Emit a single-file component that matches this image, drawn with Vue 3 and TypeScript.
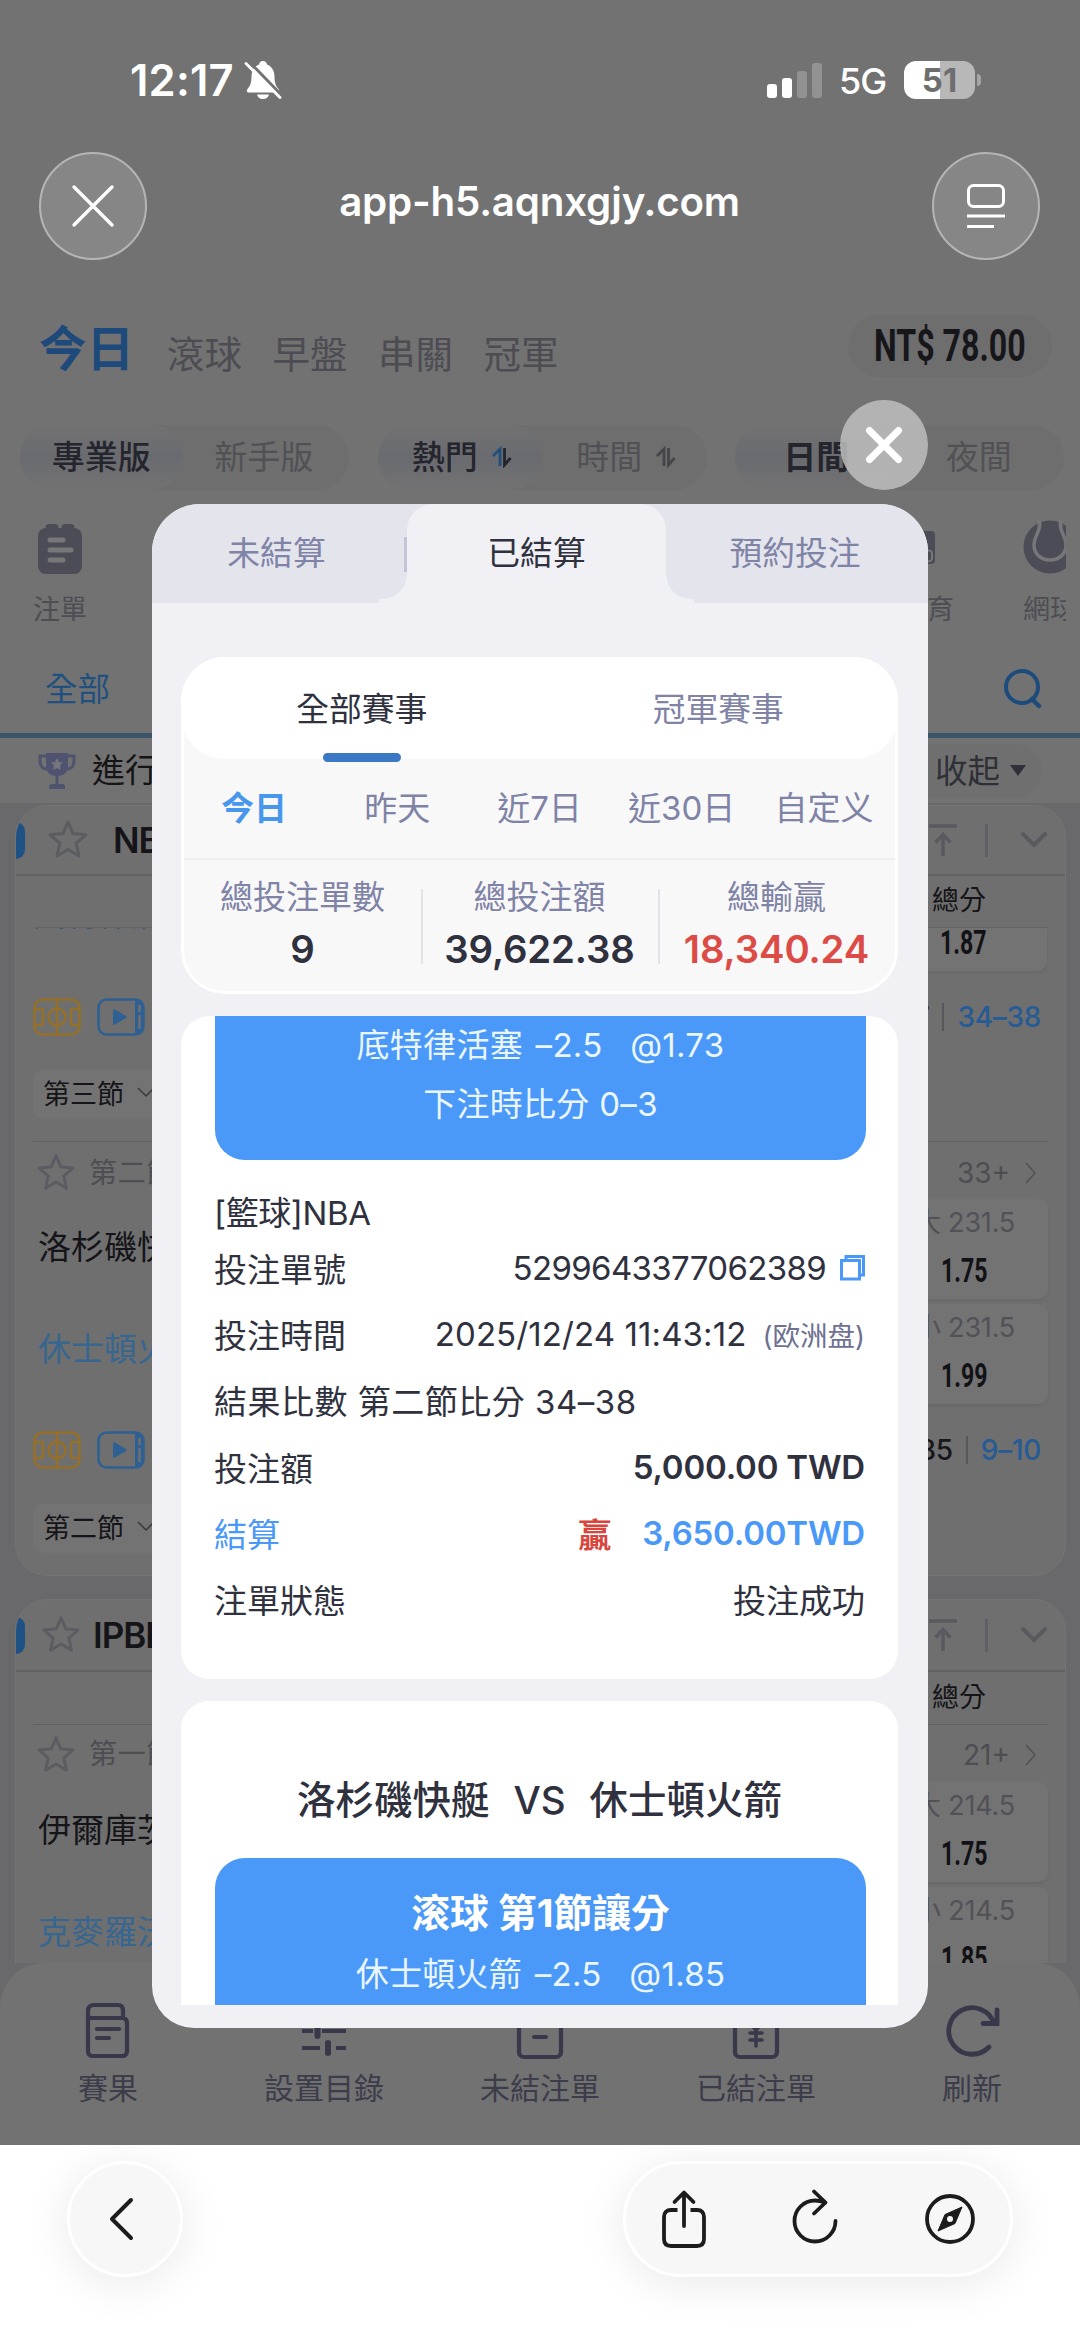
<script setup lang="ts">
interface Odd { line: string; value: string; side: string }
interface Match { period: string; more: string; home: string; away: string; odds: Odd[] }
interface DateTab { label: string; active?: boolean }
interface Stat { label: string; value: string; cls: string }

const sports = ['滾球', '早盤', '串關', '冠軍']
const dateTabs: DateTab[] = [
  { label: '今日', active: true },
  { label: '昨天' },
  { label: '近7日' },
  { label: '近30日' },
  { label: '自定义' },
]
const stats: Stat[] = [
  { label: '總投注單數', value: '9', cls: '' },
  { label: '總投注額', value: '39,622.38', cls: '' },
  { label: '總輸贏', value: '18,340.24', cls: 'win' },
]
const nba: Match = {
  period: '第二節',
  more: '33+',
  home: '洛杉磯快艇',
  away: '休士頓火箭',
  odds: [
    { side: '大', line: '231.5', value: '1.75' },
    { side: '小', line: '231.5', value: '1.99' },
  ],
}
const ipbl: Match = {
  period: '第一節',
  more: '21+',
  home: '伊爾庫茨克',
  away: '克麥羅沃',
  odds: [
    { side: '大', line: '214.5', value: '1.75' },
    { side: '小', line: '214.5', value: '1.85' },
  ],
}
</script>

<template>
  <div class="screen">
    <svg class="defs" width="0" height="0">
      <symbol id="star" viewBox="0 0 44 44">
        <path d="M22 4l5 11.6 12.800 1.200-9.600 8.400 2.800 12.800L22 31.500 11 38l2.800-12.800-9.600-8.400L17 15.600z" fill="none" stroke="currentColor" stroke-width="3" stroke-linejoin="round" />
      </symbol>
      <symbol id="court" viewBox="0 0 48 38">
        <g fill="none" stroke="currentColor" stroke-width="2.600">
          <rect x="1.500" y="1.500" width="45" height="35" rx="8" />
          <path d="M24 1.500v35M2 11h6q2 0 2 2v12q0 2-2 2H2M46 11h-6q-2 0-2 2v12q0 2 2 2h6" />
          <circle cx="24" cy="19" r="8.500" />
        </g>
      </symbol>
      <symbol id="play" viewBox="0 0 48 38">
        <rect x="1.500" y="1.500" width="45" height="35" rx="8" fill="none" stroke="currentColor" stroke-width="2.600" />
        <path d="M38 1h2q7 1 7 8v20q0 7-7 8h-2z" fill="currentColor" />
        <path d="M42.500 8v5M42.500 18v12" stroke="#707070" stroke-width="2.500" stroke-linecap="round" />
        <path d="M16 12.500v13q0 2 2 1l11-6.500q1.500-1 0-2l-11-6.500q-2-1-2 1z" fill="currentColor" />
      </symbol>
      <symbol id="pin" viewBox="0 0 32 36">
        <path d="M2 4h28M16 34V13M8.500 20.500L16 12.500l7.500 8" fill="none" stroke="currentColor" stroke-width="3.400" />
      </symbol>
      <symbol id="chev" viewBox="0 0 28 18">
        <path d="M3 3l11 11L25 3" fill="none" stroke="currentColor" stroke-width="4" stroke-linecap="round" />
      </symbol>
    </svg>

    <header class="status">
      <span class="clock">12:17</span>
      <svg class="bell" width="38" height="40" viewBox="0 0 38 40">
        <path d="M19 1c2.500 0 3.800 1.600 4 3.500 5 2 7.500 6.500 7.500 12 0 7 1.500 9.500 4 12.500 1.500 1.800.5 3.500-1.500 3.500H5c-2 0-3-1.700-1.500-3.500 2.500-3 4-5.500 4-12.500 0-5.500 2.500-10 7.500-12C15.200 2.600 16.500 1 19 1zM13 34.500h12c-.8 3-3 4.500-6 4.500s-5.200-1.500-6-4.500z" fill="#fff" />
        <path d="M5 1.500l32 33" stroke="#727272" stroke-width="3" />
        <path d="M2 3.500l34 34" stroke="#fff" stroke-width="2.800" stroke-linecap="round" />
      </svg>
      <div class="signal"><i class="on b1" /><i class="on b2" /><i class="b3" /><i class="b4" /></div>
      <span class="net">5G</span>
      <div class="battery">51</div>
      <i class="nub" />
    </header>

    <div class="browser">
      <div class="glass">
        <svg width="44" height="44" viewBox="0 0 44 44"><path d="M3 3l38 38M41 3L3 41" stroke="#fff" stroke-width="3.400" stroke-linecap="round" /></svg>
      </div>
      <span class="url">app-h5.aqnxgjy.com</span>
      <div class="glass">
        <svg width="40" height="46" viewBox="0 0 40 46"><g fill="none" stroke="#fff" stroke-width="3"><rect x="2.500" y="2.500" width="35" height="21" rx="5" /><path d="M1 33h38M1 43.500h27" /></g></svg>
      </div>
    </div>

    <nav class="topnav">
      <b class="today">今日</b>
      <span v-for="s in sports" :key="s" class="sport">{{ s }}</span>
      <div class="balance"><span>NT$ 78.00</span></div>
    </nav>

    <div class="filters">
      <div class="pill">
        <span class="seg on">專業版</span><span class="seg l4">新手版</span>
      </div>
      <div class="pill">
        <span class="seg on r4">熱門<svg class="sort act" width="20" height="22" viewBox="0 0 20 22"><path class="up" d="M1 10l7-7v17" /><path d="M12.500 2v17l6-7" /></svg></span>
        <span class="seg r4">時間<svg class="sort" width="20" height="22" viewBox="0 0 20 22"><path d="M1 10l7-7v17" /><path d="M12.500 2v17l6-7" /></svg></span>
      </div>
      <div class="pill">
        <span class="seg on day">日間</span><span class="seg l4">夜間</span>
      </div>
    </div>

    <div class="games">
      <div class="game">
        <svg width="44" height="50" viewBox="0 0 44 50">
          <rect y="4" width="44" height="46" rx="8" fill="#4c4c57" />
          <path d="M11 3.500h6M27 3.500h6" stroke="#4c4c57" stroke-width="7" stroke-linecap="round" />
          <path d="M12 16h13M12 26h21M12 36h13" stroke="#77777a" stroke-width="5" stroke-linecap="round" />
        </svg>
        <span>注單</span>
      </div>
      <div class="game esport">
        <svg width="44" height="50" viewBox="0 0 44 50"><rect y="7" width="44" height="33" rx="4" fill="#4c4c57" /><path d="M36 27q5-2 5 3v5q-1 3-5 2" fill="none" stroke="#777" stroke-width="2" /></svg>
        <span>體育</span>
      </div>
      <div class="game tennis">
        <svg width="54" height="54" viewBox="0 0 54 54">
          <circle cx="27" cy="27" r="26.500" fill="#4c4c57" />
          <path d="M16 0c3 11-5 15-5 25 0 9 7 15 16 15s16-6 16-15c0-10-8-14-5-25" fill="none" stroke="#777779" stroke-width="3.500" />
        </svg>
        <span>網球</span>
      </div>
    </div>

    <div class="allrow">
      <span>全部</span>
      <svg width="40" height="42" viewBox="0 0 40 42"><circle cx="19" cy="19" r="16" fill="none" stroke="#1d4b7c" stroke-width="4" /><path d="M29 31l7 7" stroke="#1d4b7c" stroke-width="4.500" stroke-linecap="round" /></svg>
    </div>

    <div class="live">
      <svg width="38" height="38" viewBox="0 0 38 38">
        <path d="M8 1h22v13c0 6-4 10-11 10S8 20 8 14z" fill="#50536f" />
        <path d="M8 4H2v5c0 5 3 8 7 8M30 4h6v5c0 5-3 8-7 8M19 23v10" fill="none" stroke="#50536f" stroke-width="3" />
        <path d="M11 37v-2q0-3 3-3h10q3 0 3 3v2z" fill="#50536f" />
        <path d="M19 6l2 4 4 .5-3 3 .8 4.500-3.800-2-3.800 2 .8-4.500-3-3 4-.5z" fill="#75757c" />
      </svg>
      <span class="liveText">進行中</span>
      <div class="fold"><span>收起</span><i /></div>
    </div>

    <main class="feed">
      <section class="league">
        <div class="lhead">
          <i class="mark" />
          <svg class="star first" width="46" height="44"><use href="#star" /></svg>
          <b>NBA</b>
          <svg class="pin" width="32" height="36"><use href="#pin" /></svg>
          <i class="bar" />
          <svg class="chev" width="28" height="18"><use href="#chev" /></svg>
        </div>
        <div class="lsub">總分</div>
        <div class="cut">
          <div class="cutText"><span>底特律活塞</span></div>
          <div class="odd short"><b class="cond">1.87</b></div>
        </div>
        <div class="tools">
          <svg class="court" width="48" height="38"><use href="#court" /></svg>
          <svg class="play" width="48" height="38"><use href="#play" /></svg>
          <span class="total">77</span><i class="bar2" /><span class="score">34–38</span>
        </div>
        <div class="selrow"><div class="select">第三節<svg width="18" height="11" viewBox="0 0 18 11"><path d="M1 1l8 8 8-8" fill="none" stroke="#3a3a3d" stroke-width="1.500" /></svg></div></div>
        <div class="line" />
        <div class="meta">
          <svg class="star" width="42" height="42"><use href="#star" /></svg>
          <span class="period">{{ nba.period }}</span>
          <span class="more">{{ nba.more }}</span>
          <svg width="12" height="22" viewBox="0 0 12 22"><path d="M1 1l9 10-9 10" fill="none" stroke="#515156" stroke-width="1.500" /></svg>
        </div>
        <div class="market">
          <div class="teams"><span>{{ nba.home }}</span><span class="away">{{ nba.away }}</span></div>
          <div class="odds">
            <div v-for="o in nba.odds" :key="o.side" class="odd">
              <span>{{ o.side }} {{ o.line }}</span><b class="cond">{{ o.value }}</b>
            </div>
          </div>
        </div>
        <div class="tools">
          <svg class="court" width="48" height="38"><use href="#court" /></svg>
          <svg class="play" width="48" height="38"><use href="#play" /></svg>
          <span class="total">85</span><i class="bar2" /><span class="score">9–10</span>
        </div>
        <div class="selrow last"><div class="select">第二節<svg width="18" height="11" viewBox="0 0 18 11"><path d="M1 1l8 8 8-8" fill="none" stroke="#3a3a3d" stroke-width="1.500" /></svg></div></div>
      </section>

      <section class="league second">
        <div class="lhead">
          <i class="mark" />
          <svg class="star" width="42" height="42"><use href="#star" /></svg>
          <b>IPBL</b>
          <svg class="pin" width="32" height="36"><use href="#pin" /></svg>
          <i class="bar" />
          <svg class="chev" width="28" height="18"><use href="#chev" /></svg>
        </div>
        <div class="lsub">總分</div>
        <div class="line" />
        <div class="meta">
          <svg class="star" width="42" height="42"><use href="#star" /></svg>
          <span class="period">{{ ipbl.period }}</span>
          <span class="more">{{ ipbl.more }}</span>
          <svg width="12" height="22" viewBox="0 0 12 22"><path d="M1 1l9 10-9 10" fill="none" stroke="#515156" stroke-width="1.500" /></svg>
        </div>
        <div class="market">
          <div class="teams"><span>{{ ipbl.home }}</span><span class="away">{{ ipbl.away }}</span></div>
          <div class="odds">
            <div v-for="o in ipbl.odds" :key="o.side" class="odd">
              <span>{{ o.side }} {{ o.line }}</span><b class="cond">{{ o.value }}</b>
            </div>
          </div>
        </div>
      </section>
    </main>

    <nav class="tabbar">
      <div class="tab">
        <svg width="56" height="60" viewBox="0 0 56 60"><g fill="none" stroke="#38384a" stroke-width="4.200" stroke-linecap="round"><path d="M8 17h34q5 0 5 5v28q0 5-5 5H13q-5 0-5-5V10q0-6 6-6h24q5 0 5 6v6M17 28h22M17 37h12" /></g></svg>
        <span>賽果</span>
      </div>
      <div class="tab">
        <svg width="56" height="60" viewBox="0 0 56 60"><g fill="none" stroke="#38384a" stroke-width="4.200"><path d="M6 14h20M36 14h14M6 30h11M26 30h24M6 47h18M40 47h10" /><path d="M31 9v10M21.500 25v10M32 42v10" stroke-width="6" stroke-linecap="round" /></g></svg>
        <span>設置目錄</span>
      </div>
      <div class="tab">
        <svg width="56" height="60" viewBox="0 0 56 60"><g fill="none" stroke="#38384a" stroke-width="4.200" stroke-linecap="round"><rect x="7" y="8" width="42" height="48" rx="5" /><path d="M19 24h18M22 36h12" /></g></svg>
        <span>未結注單</span>
      </div>
      <div class="tab">
        <svg width="56" height="60" viewBox="0 0 56 60"><g fill="none" stroke="#38384a" stroke-width="4.200" stroke-linecap="round"><rect x="7" y="8" width="42" height="48" rx="5" /><path d="M20 20l8 9 8-9M28 29v16M22 32h12M22 39h12" stroke-width="3.600" /></g></svg>
        <span>已結注單</span>
      </div>
      <div class="tab">
        <svg width="56" height="60" viewBox="0 0 56 60"><path d="M45 46A23.300 23.300 0 1 1 50 22" fill="none" stroke="#38384a" stroke-width="4.800" stroke-linecap="round" /><path d="M53 9v13.500H39" fill="none" stroke="#38384a" stroke-width="4.800" stroke-linecap="round" /></svg>
        <span>刷新</span>
      </div>
    </nav>

    <footer class="safari">
      <div class="back">
        <svg width="26" height="44" viewBox="0 0 26 44"><path d="M23 3L4 22l19 19" fill="none" stroke="#1c1c1c" stroke-width="4" stroke-linecap="round" stroke-linejoin="round" /></svg>
      </div>
      <div class="actions">
        <svg class="share" width="48" height="60" viewBox="0 0 48 60"><g fill="none" stroke="#1c1c1c" stroke-width="3.800" stroke-linejoin="round"><path d="M17.500 21H11q-7 0-7 7v22q0 7 7 7h26q7 0 7-7V28q0-7-7-7h-6.500" /><path d="M24 37V4M14.500 13L24 3.500l9.500 9.500" stroke-linecap="round" /></g></svg>
        <svg class="reload" width="50" height="60" viewBox="0 0 50 60"><g fill="none" stroke="#1c1c1c" stroke-width="3.800" stroke-linecap="round" stroke-linejoin="round"><path d="M35 14.500Q30 12.500 25 12.500A20.500 20.500 0 1 0 45.500 33" /><path d="M24 3.500L35.500 14.500 24 25.500" /></g></svg>
        <svg class="compass" width="52" height="52" viewBox="0 0 52 52"><circle cx="26" cy="26" r="23" fill="none" stroke="#1c1c1c" stroke-width="3.800" /><path d="M38 14l-7 16.500L14 38l7-16.500z" fill="#1c1c1c" stroke="#1c1c1c" stroke-linejoin="round" /><circle cx="26" cy="26" r="3" fill="#f7f7f7" /></svg>
      </div>
    </footer>

    <div class="modal">
      <div class="mtabs">
        <div class="mtab">未結算</div>
        <div class="mtab active">
          已結算
          <svg class="flare left" width="28" height="32" viewBox="0 0 28 32"><path d="M28 0C28 18 18 28 0 28v4h28z" fill="#f0f0f5" /></svg>
          <svg class="flare right" width="28" height="32" viewBox="0 0 28 32"><path d="M0 0C0 18 10 28 28 28v4H0z" fill="#f0f0f5" /></svg>
        </div>
        <div class="mtab">預約投注</div>
      </div>

      <div class="panel">
        <div class="kinds">
          <div class="kind on">全部賽事</div>
          <div class="kind">冠軍賽事</div>
        </div>
        <div class="dates">
          <span v-for="d in dateTabs" :key="d.label" :class="{ on: d.active }">{{ d.label }}</span>
        </div>
        <div class="stats">
          <div v-for="s in stats" :key="s.label" class="stat">
            <span>{{ s.label }}</span><b :class="s.cls">{{ s.value }}</b>
          </div>
        </div>
      </div>

      <div class="list">
        <article class="bet">
          <div class="pick end">
            <p>底特律活塞 <span class="hcap">–2.5</span> <span class="at">@1.73</span></p>
            <p>下注時比分 0–3</p>
          </div>
          <div class="sportName">[籃球]NBA</div>
          <div class="row"><span>投注單號</span><span class="val num">5299643377062389
            <svg width="25" height="26" viewBox="0 0 25 26"><g fill="none" stroke="#4a98f7" stroke-width="3"><rect x="1.500" y="5.500" width="18" height="18.500" /><path d="M6 5V1.500h17.500V20H20" /></g></svg></span></div>
          <div class="row"><span>投注時間</span><span class="val time">2025/12/24 11:43:12<em>(欧洲盘)</em></span></div>
          <div class="row"><span class="result">結果比數 第二節比分 34–38</span></div>
          <div class="row"><span>投注額</span><b class="val amt">5,000.00 TWD</b></div>
          <div class="row blue"><span>結算</span><b class="val amt"><i>贏</i>3,650.00TWD</b></div>
          <div class="row"><span>注單狀態</span><span class="val">投注成功</span></div>
        </article>
        <article class="bet next">
          <h3>洛杉磯快艇<span>VS</span>休士頓火箭</h3>
          <div class="pick start">
            <h4>滚球 第1節讓分</h4>
            <p>休士頓火箭 <span class="hcap">–2.5</span> <span class="at">@1.85</span></p>
          </div>
        </article>
      </div>
    </div>

    <div class="close">
      <svg width="40" height="40" viewBox="0 0 40 40"><path d="M5.500 5.500l29 29M34.500 5.500l-29 29" stroke="#fff" stroke-width="7" stroke-linecap="round" /></svg>
    </div>
  </div>
</template>

<style>
html, body { margin: 0; background: #fff; }
</style>

<style scoped>
* { box-sizing: border-box; }
p, h3, h4 { margin: 0; }
svg { display: block; flex: none; }
i, em { font-style: normal; }
.defs { position: absolute; }
.screen {
  position: relative; width: 1080px; height: 2347px; overflow: hidden;
  display: flex; flex-direction: column; background: #727272; white-space: nowrap;
  font-family: Inter, "Noto Sans CJK TC", "Noto Sans CJK SC", sans-serif;
}
.screen > * { flex: none; }

.status { height: 152px; padding: 8px 0 0 130px; display: flex; align-items: center; color: #fff; }
.clock { width: 114px; font-size: 43.500px; font-weight: 600; letter-spacing: 0.2px; }
.bell { margin-right: 485px; }
.signal { display: flex; align-items: flex-end; gap: 5px; height: 35px; width: 55px; }
.signal i { width: 10px; border-radius: 3px; background: #929292; }
.signal i.on { background: #fff; }
.b1 { height: 14px; } .b2 { height: 20px; } .b3 { height: 27px; } .b4 { height: 35px; }
.net { width: 65px; margin-left: 17px; padding-top: 2px; font-size: 36px; font-weight: 500; letter-spacing: -1px; }
.battery {
  width: 71px; height: 38px; border-radius: 12px; background: linear-gradient(90deg, #fff 50%, #b8b8b8 50%);
  color: #6e6e6e; font-size: 33px; font-weight: 700; line-height: 38px; text-align: center;
}
.nub { width: 4px; height: 12px; margin-left: 2px; border-radius: 0 4px 4px 0; background: #a5a5a5; }

.browser { height: 108px; padding: 0 40px 0 39px; display: flex; align-items: center; justify-content: space-between; }
.glass {
  width: 108px; height: 108px; border-radius: 50%; background: #868686; border: 2px solid #b5b5b5;
  display: flex; align-items: center; justify-content: center;
}
.url { color: #fff; font-size: 40.300px; font-weight: 600; letter-spacing: -0.200px; margin-top: -9px; }

.topnav { height: 150px; padding: 20px 28px 0 39px; display: flex; align-items: center; color: #4c4c52; }
.today { width: 128px; font-size: 47.500px; color: #1d4a7b; font-weight: 600; }
.sport { width: 105.500px; margin-top: 12px; font-size: 37.500px; }
.balance {
  margin: 2px 0 0 auto; width: 204px; height: 62px; border-radius: 31px; background: #6e6e6e;
  display: flex; align-items: center; justify-content: center; color: #17171b;
}
.balance span { font: 700 44px Roboto, sans-serif; transform: scaleX(.73); }

.filters { height: 95px; padding: 15px 16px 0 20px; display: flex; justify-content: space-between; }
.pill { width: 329px; height: 65px; border-radius: 33px; background: #6e6e6e; display: flex; }
.seg { flex: 1; display: flex; align-items: center; justify-content: center; padding-bottom: 5px; border-radius: 33px; font-size: 33px; color: #515155; }
.l4 { padding-right: 4px; }
.r4 { padding-left: 4px; }
.seg.on { color: #25252d; font-weight: 500; background: linear-gradient(#717171, #6a6b70 50%, #727272); }
.seg.day { font-weight: 700; }
.sort { margin: 4px 0 0 14px; fill: none; stroke: #45454a; stroke-width: 2.800; }
.sort.act { stroke: #25252d; }
.sort .up { stroke: #1f4f7c; }

.games { height: 140px; padding-top: 19px; width: 1066px; overflow: hidden; display: flex; }
.game { width: 60px; margin-left: 33px; display: flex; flex-direction: column; align-items: center; font-size: 27px; color: #4d4d53; }
.game span { margin-top: 19px; line-height: 34px; }
.esport { margin-left: 813px; width: 60px; }
.esport svg { margin-left: -28px; }
.tennis { margin-left: 66px; flex: none; }
.tennis svg { margin: -4px 0 0 0; }
.tennis span { width: 54px; }

.allrow { height: 93px; padding: 0 37px 0 45px; border-bottom: 5px solid #3a5467; display: flex; align-items: center; justify-content: space-between; color: #1f5080; font-size: 32.500px; }
.allrow span { margin-top: -5px; }
.live { height: 65px; padding: 0 38px; display: flex; align-items: center; font-size: 33px; }
.liveText { margin: -5px 0 0 16px; color: #151517; }
.fold { margin-left: auto; width: 140px; height: 54px; border-radius: 27px; padding-left: 33px; background: #6f6f6f; display: flex; align-items: center; font-size: 32.500px; color: #2f2f38; }
.fold span { margin-top: -4px; }
.fold i { margin-left: 10px; border: 8px solid transparent; border-top: 11px solid #30303a; border-bottom: 0; }

.feed { height: 1160px; padding: 2px 14px 0 15px; overflow: hidden; background: #69696c; }
.league { height: 771px; border-radius: 32px; overflow: hidden; background: #6f6f6f; border: 1px solid #747474; }
.league.second { height: 480px; margin-top: 23px; }
.lhead { height: 70px; display: flex; align-items: center; border-bottom: 2px solid #626265; color: #59595f; }
.second .lhead { height: 72px; }
.lhead b { font-size: 35px; font-weight: 600; color: #151519; letter-spacing: -1px; }
.mark { width: 9px; height: 37px; border-radius: 0 9px 9px 0; background: #1e5285; }
.star { color: #5b5b62; margin-left: 15px; }
.lhead .star { margin: 0 11px 0 15px; }
.lhead .star.first { margin: 0 22px 0 20px; }
.pin { margin-left: auto; margin-right: 26px; }
.bar { width: 3px; height: 33px; background: #5f5f65; margin-right: 32px; }
.chev { margin-right: 17px; }
.lsub { height: 51px; line-height: 50px; padding-right: 79px; text-align: right; font-size: 27px; color: #151519; }
.second .lsub { height: 52px; line-height: 52px; }
.cut { height: 44px; margin: 0 18px; display: flex; justify-content: space-between; border-top: 1px solid #646467; }
.cutText { width: 180px; height: 4px; overflow: hidden; display: flex; align-items: flex-end; color: #3a5a78; font-size: 32px; }
.cutText span { line-height: 34px; }
.tools { height: 92px; padding: 0 24px 0 17px; display: flex; align-items: center; font-size: 28px; font-weight: 500; letter-spacing: -.3px; }
.court { color: #94702a; margin-right: 16px; }
.play { color: #2f6093; }
.total { margin-left: auto; color: #17171b; }
.bar2 { width: 2px; height: 28px; margin: 0 13px; background: #56565b; }
.score { color: #265b95; }
.selrow { height: 78px; padding: 7px 0 0 17px; }
.selrow.last { height: 70px; padding-top: 8px; }
.select { width: 150px; height: 49px; padding: 0 0 5px 10px; border-radius: 10px; background: #737373; display: flex; align-items: center; gap: 13px; font-size: 27px; color: #151519; }
.line { height: 1px; margin: 0 17px; background: #606063; }
.meta { height: 57px; padding: 5px 28px 0 4px; display: flex; align-items: center; color: #4d4d52; font-size: 28px; }
.meta .star { margin-right: 12px; }
.period { margin-top: -5px; letter-spacing: .8px; }
.more { margin: 0 15px 0 auto; }
.second .meta { padding-top: 2px; }
.market { height: 205px; display: flex; justify-content: space-between; padding: 0 17px 0 22px; }
.teams { display: flex; flex-direction: column; font-size: 33px; color: #151519; }
.teams span { height: 102px; line-height: 96px; }
.away { color: #376690; }
.odds { width: 168px; display: flex; flex-direction: column; gap: 5px; }
.odd { width: 168px; height: 100px; border-radius: 10px; background: #737373; box-shadow: 0 2px 3px #69696b; display: flex; flex-direction: column; align-items: center; font-size: 27px; color: #515157; }
.odd span { line-height: 48px; margin-left: 1px; letter-spacing: -.2px; }
.odd.short { height: 43px; border-radius: 0 0 10px 10px; }
.cond { color: #121216; font: 700 33px/48px Roboto, sans-serif; transform: scaleX(.7); }
.short .cond { line-height: 30px; }

.tabbar { height: 182px; padding-top: 38px; border-radius: 44px 44px 0 0; background: #727272; box-shadow: 0 0 0 30px #69696c; clip-path: inset(0); display: flex; }
.tab { width: 216px; display: flex; flex-direction: column; align-items: center; font-size: 30px; color: #3c3c4a; }
.tab span { margin-top: 9px; line-height: 36px; }

.safari { height: 202px; padding: 16px 67px 0 67px; background: #fff; display: flex; justify-content: space-between; }
.back, .actions { height: 116px; border-radius: 58px; background: #f7f7f7; border: 3px solid #fff; box-shadow: 0 6px 46px rgba(0, 0, 0, .09); display: flex; align-items: center; }
.back { width: 116px; justify-content: center; padding-right: 8px; }
.actions { width: 390px; padding-left: 34px; }
.share { margin-right: 82px; }
.reload { margin: 0 84px 2px 0; }

.modal {
  position: absolute; left: 152px; top: 504px; width: 776px; height: 1524px; overflow: hidden;
  display: flex; flex-direction: column; border-radius: 48px 48px 42px 42px; background: #f0f0f5;
}
.mtabs { height: 99px; background: #e4e4ed; display: flex; }
.mtab { position: relative; width: 255px; height: 99px; line-height: 99px; text-align: center; font-size: 32.800px; color: #7f83a6; }
.mtab:first-child { padding-right: 6px; background: linear-gradient(#c3c4d8, #c3c4d8) 252px 33px / 3px 35px no-repeat; }
.mtab:last-child { width: 262px; padding-right: 4px; }
.mtab.active { width: 259px; border-radius: 26px 26px 0 0; background: #f0f0f5; color: #2f313e; }
.flare { position: absolute; bottom: 0; }
.left { right: 100%; }
.right { left: 100%; }

.panel { margin: 54px 30px 0 29px; height: 337px; border-radius: 44px; border: 3px solid #fff; background: #f8f8f9; flex: none; }
.kinds { height: 102px; margin: -3px -3px 0; border-radius: 44px; background: #fff; display: flex; font-size: 32.800px; line-height: 104px; color: #7f83a6; }
.kind { width: 50%; text-align: center; padding-right: 1px; }
.kind.on { color: #2f313e; padding: 0 0 0 3px; }
.kind.on::after { content: ""; display: block; width: 78px; height: 9px; margin: -8px auto 0; border-radius: 5px; background: #3c79c4; }
.dates { height: 101px; padding-bottom: 6px; display: flex; align-items: center; border-bottom: 2px solid #eeeef1; font-size: 33px; color: #7f83a6; }
.dates span { width: 142.600px; text-align: center; letter-spacing: 0; }
.dates .on { color: #4797ec; font-weight: 700; }
.dates span:nth-child(1) { padding-right: 2px; }
.stats { display: flex; height: 132px; }
.stat { position: relative; width: 237px; display: flex; flex-direction: column; align-items: center; font-size: 33px; line-height: 50px; padding-top: 12px; color: #7f83a6; background: linear-gradient(#e2e2e8, #e2e2e8) 0 29px / 2px 75px no-repeat; }
.stat:first-child { background: none; }
.stat b { font-size: 38.300px; font-weight: 600; line-height: 54px; letter-spacing: -.1px; color: #2f313e; }
.stat .win { color: #dc4b45; }

.list { height: 989px; margin: 22px 30px 0 29px; overflow: hidden; border-radius: 28px 28px 0 0; flex: none; }
.bet { height: 663px; padding: 0 34px; border-radius: 28px; background: #fff; color: #2f313e; font-size: 33px; overflow: hidden; }
.pick { margin: 0 -2px 0 0; background: #4a98f7; color: #eaf6ff; text-align: center; }
.pick.end { height: 144px; padding-top: 0; border-radius: 0 0 30px 30px; }
.pick p { height: 59px; line-height: 58px; letter-spacing: .3px; }
.hcap { margin-left: 3px; }
.at { margin-left: 18px; }
.sportName { height: 50px; margin: 28px 0 0 -1px; line-height: 50px; letter-spacing: -.4px; }
.row { height: 66.200px; display: flex; align-items: center; justify-content: space-between; margin-left: -1px; }
.sportName + .row { margin-top: -3px; }
.val { display: flex; align-items: center; margin-right: -1px; }
.num svg { margin-left: 14px; }
.num { letter-spacing: -.65px; }
.time { letter-spacing: .1px; }
.time em { margin-left: 16px; font-size: 27.500px; letter-spacing: 0; color: #6e7190; }
.result { letter-spacing: .5px; }
.amt { font-weight: 600; letter-spacing: -.2px; }
.blue { color: #4a98f7; }
.amt i { margin-right: 31px; color: #d9443c; }
.next { margin-top: 22px; height: 400px; }
h3 { height: 157px; padding-top: 43px; line-height: 112px; text-align: center; font-size: 38.500px; font-weight: 500; }
h3 span { margin: 0 24px; }
.start { height: 250px; padding-top: 26px; border-radius: 30px; }
h4 { height: 61px; line-height: 58px; font-size: 38.800px; font-weight: 700; color: #fff; }

.close {
  position: absolute; left: 840px; top: 400px; width: 88px; height: 90px; border-radius: 50%;
  display: flex; align-items: center; justify-content: center; background: rgba(190, 190, 190, .86);
}
</style>
